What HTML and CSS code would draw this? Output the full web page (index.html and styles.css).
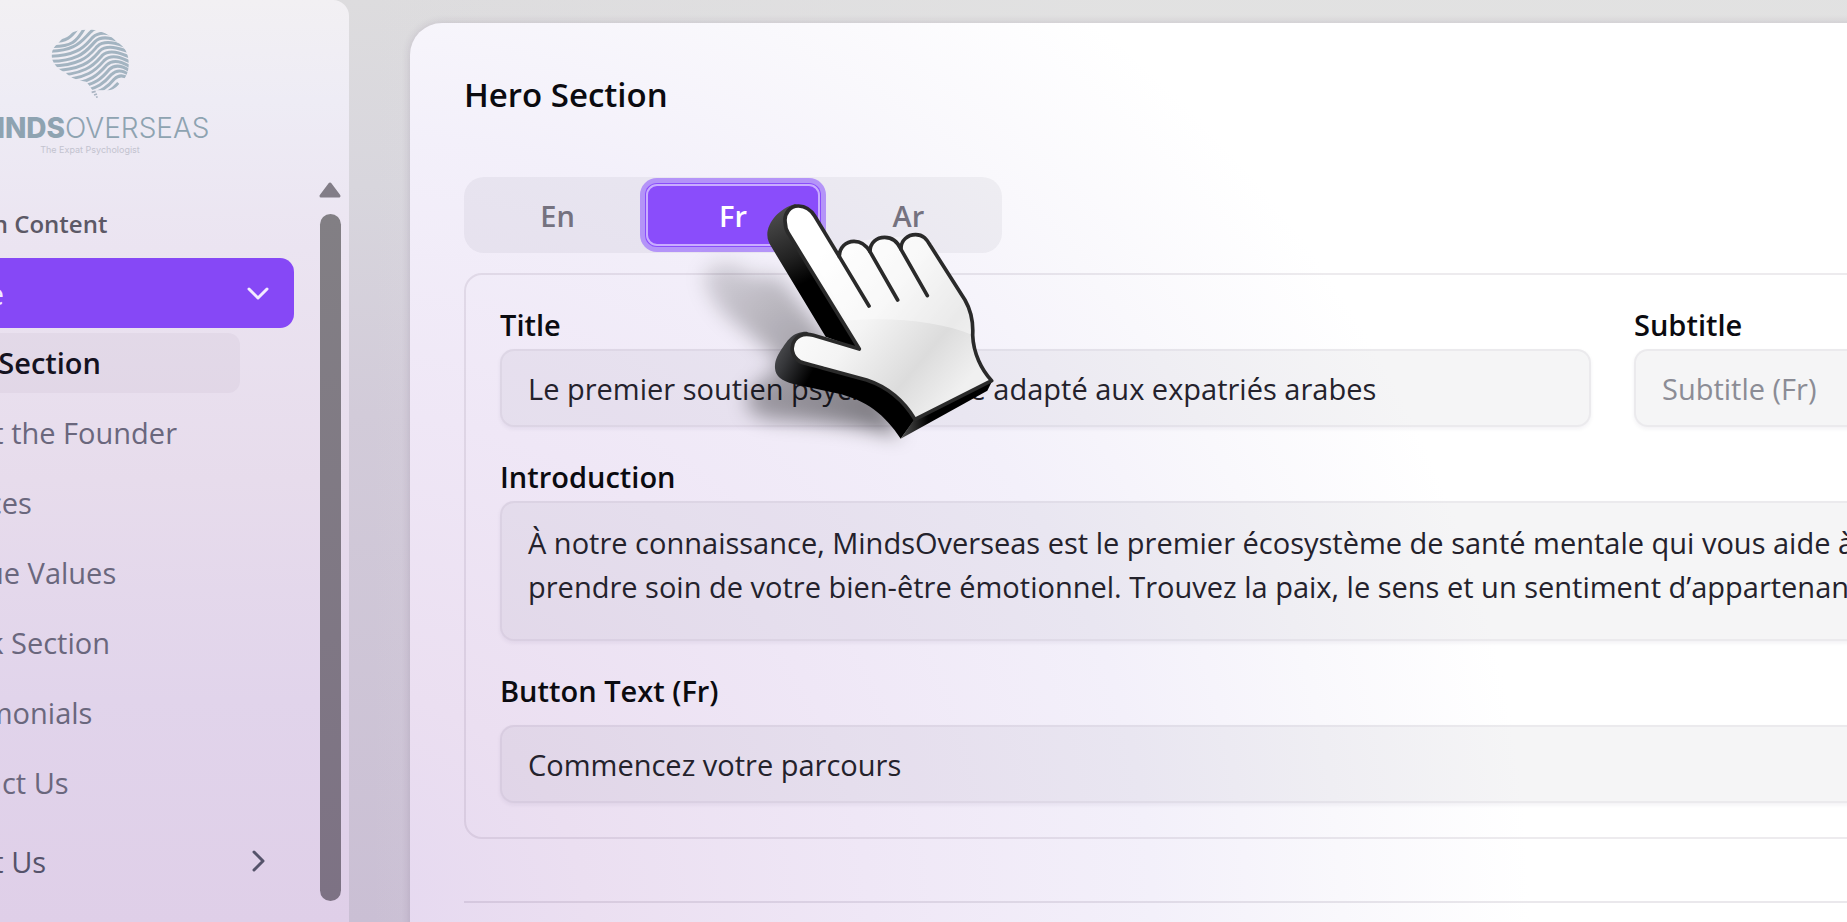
FILE: index.html
```html
<!DOCTYPE html>
<html lang="en">
<head>
<meta charset="utf-8">
<title>MindsOverseas – Hero Section</title>
<link rel="stylesheet" href="styles.css">
</head>
<body>
<div class="app">
  <aside class="sidebar">
    <header class="brand">
      <svg class="brand-mark" viewBox="0 0 234 210" aria-hidden="true">
        <defs>
          <clipPath id="brain"><path d="M20 45C38 18 70 2 105 2C145 0 180 18 198 40C220 50 234 75 233 105C234 130 222 152 205 165C195 178 180 185 165 184L125 184C118 175 112 165 106 158C85 156 60 148 45 132C20 122 0 100 2 75C4 62 10 50 20 45Z"/></clipPath>
        </defs>
        <g clip-path="url(#brain)" class="brand-waves">
          <path d="M-20 35C50 45 65 20 85 -10"/>
          <path d="M-20 51C65 59 80 35 105 -10"/>
          <path d="M-20 67C80 70 95 30 120 8C130 -4 150 -5 160 -5"/>
          <path d="M-20 82C85 85 105 45 125 25C145 5 175 12 200 22"/>
          <path d="M-20 97C90 100 110 60 132 38C152 18 185 28 215 40"/>
          <path d="M-20 111C95 114 118 75 139 52C160 32 195 42 235 56"/>
          <path d="M-20 125C100 128 125 90 146 66C167 46 200 56 245 72"/>
          <path d="M-10 139C105 141 132 104 153 80C174 60 205 70 245 88"/>
          <path d="M10 152C112 153 139 118 160 94C181 74 210 84 245 103"/>
          <path d="M40 166C118 165 146 132 167 108C188 88 215 98 245 118"/>
          <path d="M80 172C130 170 154 146 174 122C195 102 220 112 245 132"/>
          <path d="M90 186C138 180 162 160 182 136C203 116 225 128 245 146"/>
          <path d="M110 198C152 188 172 172 190 150C208 132 228 142 245 158"/>
          <path d="M140 204C172 192 186 180 202 162"/>
        </g>
        <path class="brand-stem" d="M122 190l12-3M129 198l9-3M135 205l5-2"/>
      </svg>
      <p class="brand-name"><b>MINDS</b>OVERSEAS</p>
      <p class="brand-tag">The Expat Psychologist</p>
    </header>
    <div class="sidebar-body">
      <nav class="menu" aria-label="Content">
        <h2 class="menu-title">Main Content</h2>
        <button class="menu-group menu-group-active" type="button" aria-expanded="true">Home
          <svg class="chevron" viewBox="0 0 24 24" aria-hidden="true"><path d="M3 8l9 9 9-9"/></svg>
        </button>
        <ul class="menu-list">
          <li><a class="menu-link menu-link-active" href="#hero">Hero Section</a></li>
          <li><a class="menu-link" href="#founder">About the Founder</a></li>
          <li><a class="menu-link" href="#services">Services</a></li>
          <li><a class="menu-link" href="#values">Unique Values</a></li>
          <li><a class="menu-link" href="#check">Check Section</a></li>
          <li><a class="menu-link" href="#testimonials">Testimonials</a></li>
          <li><a class="menu-link" href="#contact">Contact Us</a></li>
        </ul>
        <button class="menu-group" type="button" aria-expanded="false">About Us
          <svg class="chevron" viewBox="0 0 24 24" aria-hidden="true"><path d="M8 3l9 9-9 9"/></svg>
        </button>
      </nav>
      <div class="scrollbar" aria-hidden="true">
        <svg class="scroll-up" viewBox="0 0 24 18"><path d="M12 3L21 15H3Z"/></svg>
        <div class="scroll-thumb"></div>
      </div>
    </div>
  </aside>

  <main class="main">
    <section class="card" id="hero">
      <h1 class="card-title">Hero Section</h1>
      <div class="tabs" role="tablist">
        <button class="tab" type="button" role="tab" aria-selected="false">En</button>
        <button class="tab tab-active" type="button" role="tab" aria-selected="true">Fr</button>
        <button class="tab" type="button" role="tab" aria-selected="false">Ar</button>
        <svg class="pointer" viewBox="0 0 1080 900" aria-hidden="true">
          <defs>
            <linearGradient id="face" x1="0.2" y1="0.2" x2="0.9" y2="0.8">
              <stop offset="0" stop-color="#fff"/><stop offset="0.4" stop-color="#f4f4f4"/><stop offset="0.75" stop-color="#dcdcdc"/><stop offset="1" stop-color="#f0f0f0"/>
            </linearGradient>
            <linearGradient id="side" x1="0" y1="0" x2="0.3" y2="1">
              <stop offset="0" stop-color="#555"/><stop offset="0.4" stop-color="#222"/><stop offset="0.6" stop-color="#000"/>
            </linearGradient>
            <linearGradient id="thumb" x1="0" y1="0" x2="1" y2="0.4">
              <stop offset="0" stop-color="#5a5b5e"/><stop offset="0.16" stop-color="#36373a"/><stop offset="0.36" stop-color="#000"/>
            </linearGradient>
            <linearGradient id="shade" x1="0" y1="0" x2="1" y2="1">
              <stop offset="0" stop-color="#000" stop-opacity="0.12"/><stop offset="1" stop-color="#000" stop-opacity="0.5"/>
            </linearGradient>
            <linearGradient id="edge" x1="0" y1="0" x2="1" y2="0">
              <stop offset="0" stop-color="#555"/><stop offset="0.3" stop-color="#000"/>
            </linearGradient>
            <filter id="soft" x="-30%" y="-30%" width="160%" height="160%"><feGaussianBlur stdDeviation="28"/></filter>
            <path id="hand" d="M316 190C310 160 332 137 356 138C382 139 394 152 404 168L478 290C478 262 498 244 522 244C546 244 560 258 570 275C570 248 590 232 614 232C640 232 654 248 663 268C662 240 684 224 707 224C730 224 740 238 750 255L855 420C875 455 880 490 878 525C880 580 905 630 935 662L705 778C670 720 620 680 560 660L430 625C400 615 375 612 360 605C335 590 330 560 345 540C360 520 385 522 400 526L538 567L325 220C318 210 316 200 316 190Z"/>
          </defs>
          <path filter="url(#soft)" fill="url(#shade)" d="M70 350C80 310 150 290 210 345L300 350L460 560L600 700L660 830C560 800 460 790 330 780C240 780 190 760 200 710C220 660 290 650 300 600L180 500C110 450 80 400 70 350Z"/>
          <path fill="url(#side)" d="M345 132C300 145 262 185 262 225C262 240 268 250 275 262L437 530L540 568L560 500L400 160Z"/>
          <path fill="url(#thumb)" d="M380 515C335 515 320 545 303 570C290 590 284 605 285 625C287 650 305 662 340 672L470 700C560 720 615 765 662 836L705 778L600 640Z"/>
          <path fill="url(#edge)" d="M662 836L705 775L938 660L922 692Z"/>
          <use href="#hand" fill="url(#face)"/>
          <path fill="#fff" opacity="0.4" d="M478 290L522 244L614 234L707 226L750 255L855 420C872 450 877 480 877 525C780 485 640 470 500 482L400 300Z"/>
          <use href="#hand" class="pointer-crease"/>
          <path class="pointer-crease" d="M478 290L567 438M570 275L653 420M663 268L742 407"/>
        </svg>
      </div>

      <form class="panel">
        <div class="field">
          <label for="title">Title</label>
          <input class="control" id="title" type="text" value="Le premier soutien psychologique adapté aux expatriés arabes">
        </div>
        <div class="field">
          <label for="subtitle">Subtitle</label>
          <input class="control" id="subtitle" type="text" placeholder="Subtitle (Fr)">
        </div>
        <div class="field field-wide">
          <label for="intro">Introduction</label>
          <textarea class="control control-area" id="intro" rows="2">À notre connaissance, MindsOverseas est le premier écosystème de santé mentale qui vous aide à
prendre soin de votre bien-être émotionnel. Trouvez la paix, le sens et un sentiment d’appartenance</textarea>
        </div>
        <div class="field field-wide field-spaced">
          <label for="cta">Button Text (Fr)</label>
          <input class="control" id="cta" type="text" value="Commencez votre parcours">
        </div>
      </form>
      <hr class="divider">
    </section>
  </main>
</div>
</body>
</html>
```

FILE: styles.css
```css
* { box-sizing: border-box; }

body {
  margin: 0;
  overflow: hidden;
  color: #0b0b10;
  font-family: "Open Sans", "Noto Sans", sans-serif;
  font-size: 29px;
}

h1, h2, p, ul { margin: 0; padding: 0; }
button, input, textarea { font: inherit; color: inherit; }

.app {
  display: flex;
  height: 100vh;
  overflow: hidden;
  background:
    linear-gradient(90deg, transparent 20%, rgba(226, 226, 226, 0.9) 60%),
    linear-gradient(180deg, #dddcde 0%, #d8d6dd 20%, #d2cbd9 45%, #cabfd4 100%);
}

.sidebar {
  display: flex;
  flex-direction: column;
  flex: 0 0 349px;
  border-top-right-radius: 16px;
  overflow: hidden;
  background: linear-gradient(180deg, #f2f0f3 0%, #eeecf5 11%, #ebe4f1 27%, #e7dcec 52%, #e1d4eb 76%, #dfcfe8 100%);
}

.brand {
  display: flex;
  flex-direction: column;
  align-items: center;
  width: 244px;
  margin-left: -32px;
  padding-top: 29px;
  color: #8ea3b1;
}

.brand-mark { width: 78px; height: 70px; }
.brand-waves { fill: none; stroke: #a3b4c1; stroke-width: 9; }
.brand-stem { fill: none; stroke: #aab4c2; stroke-width: 5; }

.brand-name {
  margin-top: 12px;
  font-family: Inter, sans-serif;
  font-weight: 300;
  font-size: 28px;
  line-height: 34px;
  white-space: nowrap;
}
.brand-name b { font-weight: 800; }
.brand-tag {
  font-family: Inter, sans-serif;
  font-size: 9px;
  line-height: 10px;
  color: #c3c3cf;
}

.sidebar-body {
  display: flex;
  flex: 1;
  justify-content: space-between;
  padding: 26px 8px 21px 0;
}

.menu {
  width: 384px;
  margin-left: -90px;
  padding-top: 25px;
}

.menu-title {
  padding-left: 40px;
  font-weight: 600;
  font-size: 24px;
  line-height: 36px;
  color: #5c5966;
}

.menu-group {
  display: flex;
  align-items: center;
  justify-content: space-between;
  width: 100%;
  height: 70px;
  margin-top: 16px;
  padding: 0 24px 0 12px;
  border: 0;
  border-radius: 14px;
  background: none;
  color: #55536a;
}
.menu-group-active { background: #8648f6; color: #f3ebff; }
.menu-list + .menu-group { margin-top: 13px; }

.chevron {
  width: 24px;
  height: 24px;
  fill: none;
  stroke: currentColor;
  stroke-width: 3;
  stroke-linecap: round;
  stroke-linejoin: round;
}

.menu-list {
  display: grid;
  gap: 10px;
  margin-right: 54px;
  padding-top: 5px;
  list-style: none;
}
.menu-link {
  display: block;
  padding-left: 12px;
  border-radius: 12px;
  line-height: 60px;
  color: #6a677d;
  text-decoration: none;
}
.menu-link-active {
  background: rgba(90, 70, 110, 0.05);
  font-weight: 600;
  color: #14121f;
}

.scrollbar {
  display: flex;
  flex-direction: column;
  align-items: center;
  gap: 15px;
  flex: none;
  width: 22px;
}
.scroll-up {
  width: 24px;
  height: 18px;
  fill: #827d87;
  stroke: #827d87;
  stroke-width: 3;
  stroke-linejoin: round;
}
.scroll-thumb {
  flex: 1;
  width: 21px;
  border-radius: 11px;
  background: linear-gradient(180deg, #827f84, #7d7284);
}

.main {
  flex: 1;
  min-width: 0;
  padding: 23px 0 0 61px;
}

.card {
  min-height: 100%;
  margin-right: -968px;
  padding: 48px 54px;
  border-radius: 32px 32px 0 0;
  box-shadow: 0 0 8px rgba(60, 40, 80, 0.16);
  background: radial-gradient(1180px 1160px at -60px 900px, #e5d8f0 0%, #ebdff1 20%, #efe7f6 44%, #f3f0fa 68%, #f9f8fc 84%, #ffffff 100%) #ffffff;
}

.card-title {
  font-weight: 600;
  font-size: 33px;
  line-height: 48px;
}

.tabs {
  position: relative;
  display: flex;
  width: 538px;
  margin-top: 58px;
  padding: 6px;
  border-radius: 20px;
  background: rgba(40, 30, 60, 0.05);
}
.tab {
  flex: 1;
  height: 64px;
  border: 0;
  border-radius: 12px;
  background: none;
  color: #75727f;
  font-weight: 600;
}
.tab-active {
  background: #8a4dfb;
  color: #ffffff;
  box-shadow: inset 0 0 0 1px #8a4dfb, inset 0 0 0 3px #c9adff, 0 0 0 5px #b494f8;
}

.pointer {
  position: absolute;
  top: -17px;
  left: 216px;
  width: 360px;
  height: 300px;
  pointer-events: none;
}
.pointer-crease {
  fill: none;
  stroke: #2a2a2a;
  stroke-width: 11;
  stroke-linecap: round;
  stroke-linejoin: round;
}

.panel {
  display: grid;
  grid-template-columns: 1fr 1fr;
  gap: 30px 43px;
  margin-top: 20px;
  padding: 30px 34px 34px;
  border: 2px solid rgba(50, 30, 70, 0.09);
  border-radius: 18px;
}

.field { display: grid; gap: 4px; }
.field-wide { grid-column: 1 / -1; }
.field-spaced { gap: 14px; }

.field label {
  font-weight: 600;
  line-height: 40px;
}

.control {
  width: 100%;
  height: 78px;
  padding: 0 26px;
  border: 2px solid rgba(50, 30, 70, 0.05);
  border-radius: 14px;
  outline: 0;
  background: rgba(30, 20, 40, 0.045);
  box-shadow: 0 2px 4px rgba(40, 20, 60, 0.06);
  color: #24222c;
}
.control::placeholder { color: #8b8c95; opacity: 1; }
.control-area {
  display: block;
  height: 140px;
  padding: 18px 26px;
  line-height: 44px;
  white-space: pre;
  overflow: hidden;
  resize: none;
}

.divider {
  height: 2px;
  margin: 62px 0 0;
  border: 0;
  background: rgba(50, 30, 70, 0.1);
}
```
